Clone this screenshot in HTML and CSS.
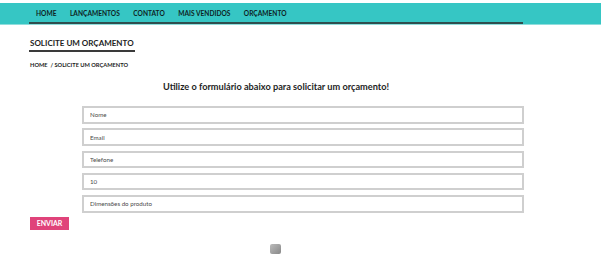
FILE: index.html
```html
<!DOCTYPE html>
<html lang="pt-BR">
<head>
    <meta charset="UTF-8">
    <meta name="viewport" content="width=device-width, initial-scale=1.0">
    <title>Solicite um orçamento</title>
    <link rel="stylesheet" href="styles.css">
</head>
<body>
    <header class="topbar">
        <nav class="menu">
            <a href="#">HOME</a>
            <a href="#">LANÇAMENTOS</a>
            <a href="#">CONTATO</a>
            <a href="#">MAIS VENDIDOS</a>
            <a href="#">ORÇAMENTO</a>
        </nav>
    </header>

    <main class="page">
        <h2 class="page-title">SOLICITE UM ORÇAMENTO</h2>
        <div class="breadcrumb">HOME &nbsp;/ SOLICITE UM ORÇAMENTO</div>

        <h3 class="intro">Utilize o formulário abaixo para solicitar um orçamento!</h3>

        <form class="quote-form">
            <input type="text" placeholder="Nome">
            <input type="text" placeholder="Email">
            <input type="text" placeholder="Telefone">
            <input type="text" placeholder="10">
            <input type="text" placeholder="Dimensões do produto">
        </form>

        <button class="btn" type="button">ENVIAR</button>

        <div class="loader"></div>
    </main>
</body>
</html>
```

FILE: styles.css
```css
* {
    margin: 0;
    padding: 0;
    box-sizing: border-box;
    font-family: Lato, 'Open Sans', sans-serif;
}

body {
    background: #fff;
    color: #1b1b1b;
    width: 601px;
}

.topbar {
    margin-top: 3px;
    background: #36c6c4;
    border-bottom: 1px solid #8fdedd;
}

.menu {
    margin-left: 29px;
    width: 494px;
    height: 21px;
    display: flex;
    align-items: center;
    padding-left: 7px;
    gap: 13.5px;
    border-bottom: 2px solid #2f4e4e;
}

.menu a {
    color: #0e1f1f;
    text-decoration: none;
    font-weight: 700;
    font-size: 6.6px;
}

.page {
    width: 494px;
    margin-left: 29px;
}

.page-title {
    display: inline-block;
    margin-top: 13px;
    font-size: 8px;
    font-weight: 700;
    color: #222;
    padding: 0 1px 2px;
    border-bottom: 2px solid #3a3a3a;
}

.breadcrumb {
    margin-top: 9px;
    font-size: 5.7px;
    font-weight: 700;
    color: #222;
    padding-left: 1px;
}

.intro {
    margin-top: 13px;
    text-align: center;
    font-size: 9.2px;
    font-weight: 700;
    color: #1e1e1e;
}

.quote-form {
    margin: 14px 0 0 53px;
    display: flex;
    flex-direction: column;
    gap: 4.75px;
}

.quote-form input {
    height: 17.5px;
    width: 442px;
    border: 2px solid #cfcfcf;
    padding-left: 6px;
    font-size: 6.2px;
    outline: none;
}

.quote-form input::placeholder {
    color: #4a4a4a;
}

.btn {
    display: block;
    margin-top: 4px;
    margin-left: 1px;
    background: #e0437a;
    color: #fff;
    border: none;
    font-weight: 700;
    font-size: 7px;
    width: 39px;
    height: 13px;
}

.loader {
    width: 11px;
    height: 10px;
    margin: 14px 0 0 241px;
    border-radius: 2px;
    background: linear-gradient(135deg, #bbb, #888);
}
```
